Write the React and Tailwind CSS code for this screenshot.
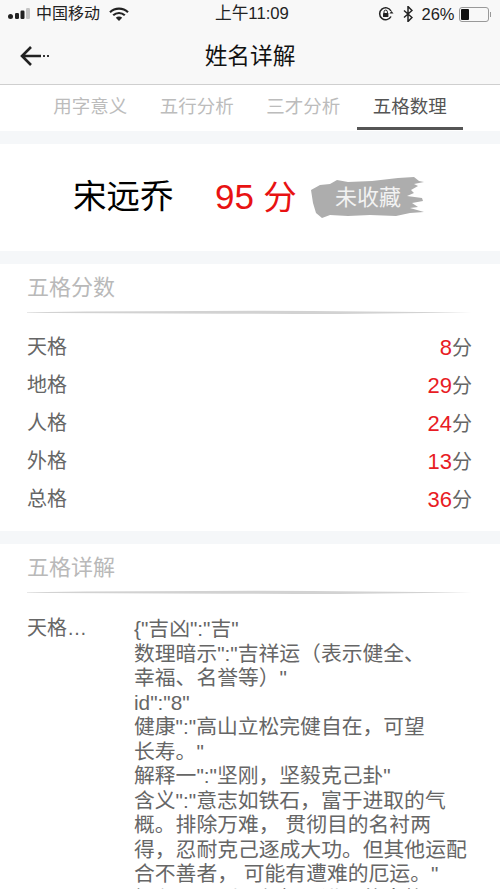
const cjk = 'font-["Liberation_Sans","Noto_Sans_CJK_SC",sans-serif]';

const tabs = ['用字意义', '五行分析', '三才分析', '五格数理'];

const scores = [
  ['天格', 8],
  ['地格', 29],
  ['人格', 24],
  ['外格', 13],
  ['总格', 36],
];

const detailLines = [
  '{"吉凶":"吉"',
  '数理暗示":"吉祥运（表示健全、',
  '幸福、名誉等）"',
  'id":"8"',
  '健康":"高山立松完健自在，可望',
  '长寿。"',
  '解释一":"坚刚，坚毅克己卦"',
  '含义":"意志如铁石，富于进取的气',
  '概。排除万难， 贯彻目的名衬两',
  '得，忍耐克己逐成大功。但其他运配',
  '合不善者， 可能有遭难的厄运。"',
  '解释二":"刚强坚毅，进取的人格',
];

function StatusBar() {
  return (
    <div className="h-[28px] flex items-center justify-between pl-2 pr-[9px] text-[#222] relative">
      <div className="flex items-center">
        <svg width="22" height="14" viewBox="0 0 22 14" className="mr-[6px]">
          <circle cx="2.5" cy="9.5" r="2.5" fill="#222" />
          <rect x="7" y="6" width="4" height="6" rx="1.2" fill="#222" />
          <rect x="12.5" y="3.5" width="4" height="8.5" rx="1.2" fill="#222" />
          <rect x="18" y="1" width="4" height="11" rx="1.2" fill="#c4c4c4" />
        </svg>
        <span className="text-[16px] leading-none">中国移动</span>
        <svg width="20" height="15" viewBox="0 0 20 15" className="ml-[9px]">
          <path d="M1 5.2a13 13 0 0 1 18 0" fill="none" stroke="#222" strokeWidth="2.2" />
          <path d="M4.2 8.3a8.4 8.4 0 0 1 11.6 0" fill="none" stroke="#222" strokeWidth="2.2" />
          <path d="M6.8 10.8a4.6 4.6 0 0 1 6.4 0L10 14z" fill="#222" />
        </svg>
      </div>
      <span className="absolute left-[215px] top-[5px] text-[16.7px] leading-[18px]">上午11:09</span>
      <div className="flex items-center">
        <svg width="16" height="16" viewBox="0 0 16 16" className="mr-[9px]">
          <path d="M13 10.5A6 6 0 1 1 13 5" fill="none" stroke="#222" strokeWidth="1.5" />
          <path d="M11.5 7.5h4l-2-2.4z" fill="#222" />
          <rect x="5" y="7" width="5.4" height="4" rx="0.6" fill="#222" />
          <path d="M6 7V5.8a1.7 1.7 0 0 1 3.4 0V7" fill="none" stroke="#222" strokeWidth="1" />
        </svg>
        <svg width="10" height="16" viewBox="0 0 10 16" className="mr-[8px]">
          <path d="M1 4.5l8 7-4 4V.5l4 4-8 7" fill="none" stroke="#222" strokeWidth="1.5" />
        </svg>
        <span className="text-[16.5px] leading-none">26%</span>
        <div className="ml-[4px] w-[30px] h-[15px] border border-[#999] rounded-[3px] p-[1px]">
          <div className="w-[8px] h-full bg-[#111] rounded-[1px]" />
        </div>
        <div className="w-[1.5px] h-[5px] bg-[#999] ml-[1px]" />
      </div>
    </div>
  );
}

function NavBar() {
  return (
    <div className="h-[57px] border-b border-[#cfcfcf] flex items-center relative">
      <svg width="32" height="22" viewBox="0 0 32 22" className="ml-[20px]">
        <path d="M11 2L2 11l9 9M2 11h19" fill="none" stroke="#222" strokeWidth="2.6" />
        <rect x="23" y="10" width="2" height="2" fill="#333" />
        <rect x="27" y="10" width="2" height="2" fill="#333" />
      </svg>
      <span className="absolute inset-x-0 text-center text-[22.7px] text-[#111]">姓名详解</span>
    </div>
  );
}

function Tabs() {
  return (
    <div className="h-[46px] bg-white flex px-[37px]">
      {tabs.map((t, i) => (
        <div
          key={t}
          className={
            i === 3
              ? 'flex-1 text-center text-[18.5px] leading-[44px] text-[#555] border-b-[3px] border-[#555] h-[45px]'
              : 'flex-1 text-center text-[18.5px] leading-[44px] text-[#bcbcbc]'
          }
        >
          {t}
        </div>
      ))}
    </div>
  );
}

function BrushBadge() {
  return (
    <div className="relative w-[116px] h-[44px] flex items-center">
      <svg width="116" height="44" viewBox="0 0 116 44" className="absolute inset-0">
        <path
          d="M1 14L10 9L20 8L27 4L38 6L62 5L88 2L104 1L109 5L114 6L104 8L108 10L101 14L104 17L97 20L112 22L113 25L102 27L108 31L100 32L114 36L100 37L86 40L60 39L38 40L20 39L12 42L6 37L3 27Z"
          fill="#adadad"
        />
      </svg>
      <span className="relative ml-[25px] text-[22px] text-[#f2f2f2] leading-none">未收藏</span>
    </div>
  );
}

function SectionTitle({ children }) {
  return (
    <>
      <div className="h-[46px] flex items-center text-[22px] text-[#b9b9b9]">{children}</div>
      <svg width="445" height="5" viewBox="0 0 445 5" className="block">
        <path d="M0 2.2Q120 1 230 0.8Q340 1.4 445 2.4Q350 3.8 270 4Q120 3.4 0 2.8Z" fill="#d2d2d2" />
      </svg>
    </>
  );
}

export default function App() {
  return (
    <div className={`h-[889px] w-[500px] overflow-hidden bg-[#f5f7f9] ${cjk}`}>
      <div className="bg-[#f8f8f8]">
        <StatusBar />
        <NavBar />
      </div>
      <Tabs />

      <div className="mt-[13px] h-[107px] bg-white flex items-center pl-[73px]">
        <span className="text-[33.5px] text-black w-[142px]">宋远乔</span>
        <span className="text-[33.5px] text-[#e81212] w-[95px] whitespace-nowrap">
          <span className="text-[35px]">95</span> 分
        </span>
        <BrushBadge />
      </div>

      <div className="mt-[13px] h-[267px] bg-white px-[27px]">
        <SectionTitle>五格分数</SectionTitle>
        <div className="pt-[13px]">
          {scores.map(([name, value]) => (
            <div key={name} className="h-[38px] flex items-center justify-between text-[20px] text-[#666]">
              <span>{name}</span>
              <span className="mr-[1px]">
                <span className="text-[#e81c24] text-[22px]">{value}</span>分
              </span>
            </div>
          ))}
        </div>
      </div>

      <div className="mt-[13px] bg-white px-[27px] h-[400px]">
        <SectionTitle>五格详解</SectionTitle>
        <div className="flex pt-[18px] text-[#666]">
          <span className="w-[107px] shrink-0 text-[20px] leading-[30px]">天格…</span>
          <div className="pt-[4px] text-[20.8px] leading-[24.5px] whitespace-nowrap">
            {detailLines.map((line) => (
              <div key={line}>{line}</div>
            ))}
          </div>
        </div>
      </div>
    </div>
  );
}
